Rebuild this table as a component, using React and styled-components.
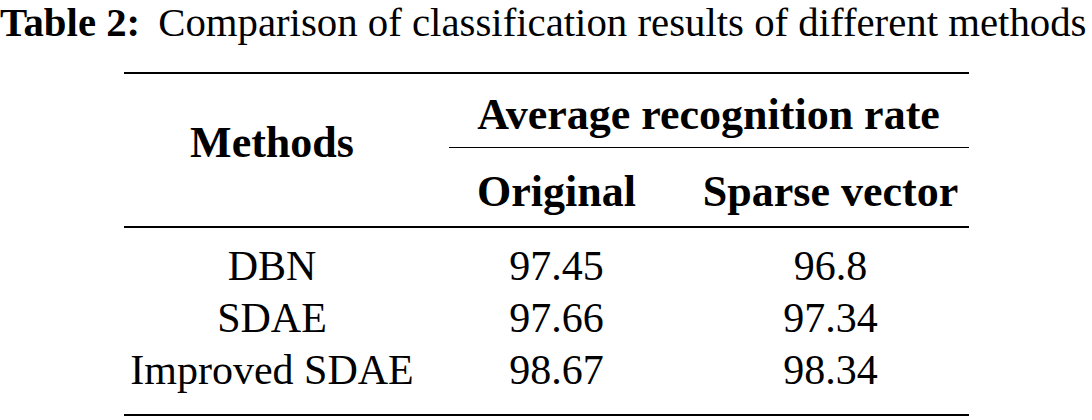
import React from 'react';
import styled, { createGlobalStyle } from 'styled-components';

const GlobalStyle = createGlobalStyle`
    html, body {
        margin: 0;
        padding: 0;
        background: #ffffff;
    }
    body {
        font-family: "Liberation Serif", "Times New Roman", serif;
        color: #000000;
    }
`;

const Page = styled.div`
    width: 1092px;
    height: 420px;
    overflow: hidden;
    display: flex;
    flex-direction: column;
`;

const Caption = styled.div`
    font-size: 40.8px;
    line-height: 46px;
    white-space: nowrap;
`;

const CaptionLabel = styled.b`
    font-weight: 700;
    margin-right: 18px;
`;

const Table = styled.table`
    margin: 26px auto 0;
    width: 845px;
    border-collapse: collapse;
    table-layout: fixed;
    border-top: 2px solid #000;
    border-bottom: 2px solid #000;
`;

const Head = styled.thead`
    border-bottom: 2px solid #000;
`;

const HeadCell = styled.th`
    font-size: 44px;
    line-height: 44px;
    font-weight: 700;
    text-align: center;
    vertical-align: ${props => props.$middle ? 'middle' : 'top'};
    padding: ${props => props.$pad || '0'};
    white-space: nowrap;
`;

const Spanner = styled.div`
    margin-left: 28px;
    padding: 19px 0 10px;
    border-bottom: 1.5px solid #000;
`;

const Body = styled.tbody`
    tr:first-child td { padding-top: 12px; }
    tr:last-child td { padding-bottom: 18px; }
`;

const Cell = styled.td`
    font-size: 42px;
    line-height: 52px;
    text-align: center;
    padding: 0;
    white-space: nowrap;
`;

const rows = [
    ['DBN', '97.45', '96.8'],
    ['SDAE', '97.66', '97.34'],
    ['Improved SDAE', '98.67', '98.34'],
];

const App = () => {
    return (
        <Page>
            <GlobalStyle />
            <Caption>
                <CaptionLabel>Table 2:</CaptionLabel>Comparison of classification results of different methods
            </Caption>
            <Table>
                <colgroup>
                    <col style={{ width: 297 }} />
                    <col style={{ width: 272 }} />
                    <col style={{ width: 276 }} />
                </colgroup>
                <Head>
                    <tr>
                        <HeadCell rowSpan={2} $middle $pad="0 0 14px">Methods</HeadCell>
                        <HeadCell colSpan={2}>
                            <Spanner>Average recognition rate</Spanner>
                        </HeadCell>
                    </tr>
                    <tr>
                        <HeadCell $pad="22px 0 12px">Original</HeadCell>
                        <HeadCell $pad="22px 0 12px">Sparse vector</HeadCell>
                    </tr>
                </Head>
                <Body>
                    {rows.map(r => (
                        <tr key={r[0]}>
                            <Cell>{r[0]}</Cell>
                            <Cell>{r[1]}</Cell>
                            <Cell>{r[2]}</Cell>
                        </tr>
                    ))}
                </Body>
            </Table>
        </Page>
    );
};

export default App;
